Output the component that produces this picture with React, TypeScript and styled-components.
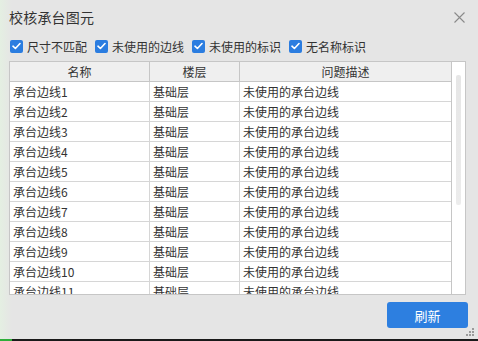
import React from "react";
import styled, { createGlobalStyle } from "styled-components";

const Global = createGlobalStyle`
  html, body { margin: 0; padding: 0; }
  body {
    background: #e5e5e5;
    font-family: "Noto Sans CJK SC", "Noto Sans", sans-serif;
    color: #333;
  }
  * { box-sizing: border-box; }
`;

const Window = styled.div`
  position: relative;
  width: 478px;
  height: 341px;
  overflow: hidden;
  background: linear-gradient(90deg, #e4efe2 0px, #e5e8e4 8px, #e5e5e5 12px, #e5e5e5 100%);
  display: flex;
  flex-direction: column;
  padding: 0 12px 0 9px;
`;

const TitleBar = styled.div`
  height: 34px;
  display: flex;
  align-items: center;
  justify-content: space-between;
`;

const Title = styled.div`
  font-size: 14px;
  color: #333;
  letter-spacing: 0.2px;
`;

const Close = styled.div`
  width: 12px;
  height: 12px;
  margin-right: 1px;
  display: flex;
  align-items: center;
  justify-content: center;
`;

const Filters = styled.div`
  height: 24px;
  margin-bottom: 3px;
  display: flex;
  align-items: center;
  gap: 8px;
  padding-left: 1px;
`;

const Check = styled.label`
  display: flex;
  align-items: center;
  gap: 4px;
  font-size: 12px;
  color: #333;
`;

const Box = styled.span`
  width: 13px;
  height: 13px;
  border-radius: 2px;
  background: #2b7de0;
  display: flex;
  align-items: center;
  justify-content: center;
`;

const Table = styled.div`
  height: 234px;
  border: 1px solid #c6c6c6;
  background: #fff;
  display: flex;
  overflow: hidden;
`;

const Grid = styled.div`
  flex: 1;
  display: grid;
  grid-template-columns: 140px 90px 1fr;
  grid-auto-rows: 20px;
  align-content: start;
`;

const Head = styled.div<{ $last?: boolean }>`
  background: #efefef;
  border-bottom: 1px solid #c6c6c6;
  border-right: ${(p) => (p.$last ? "none" : "1px solid #c6c6c6")};
  font-size: 12px;
  display: flex;
  align-items: center;
  justify-content: center;
  color: #333;
`;

const Cell = styled.div<{ $last?: boolean }>`
  border-bottom: 1px solid #d6d6d6;
  border-right: ${(p) => (p.$last ? "none" : "1px solid #d6d6d6")};
  font-size: 12px;
  display: flex;
  align-items: center;
  padding-left: 3px;
  color: #333;
  white-space: nowrap;
`;

const Scroll = styled.div`
  width: 14px;
  border-left: 1px solid #c6c6c6;
  background: #fff;
  display: flex;
  justify-content: center;
  padding-top: 13px;
`;

const Thumb = styled.div`
  width: 5px;
  height: 130px;
  border-radius: 2px;
  background: linear-gradient(180deg, #e6e6e6, #ececec);
`;

const Footer = styled.div`
  margin-top: 7px;
  display: flex;
  justify-content: flex-end;
`;

const Button = styled.button`
  width: 81px;
  height: 26px;
  border: none;
  border-radius: 3px;
  background: #2d7fe0;
  color: #fff;
  font-family: inherit;
  font-size: 13px;
  margin-right: -2px;
`;

const Grip = styled.svg`
  position: absolute;
  right: 4px;
  bottom: 5px;
`;

const Taskbar = styled.div`
  position: absolute;
  left: 0;
  right: 0;
  bottom: 0;
  height: 2px;
  background: linear-gradient(90deg, #2eae3a 0, #2eae3a 12px, #1a1a1a 12px);
`;

const Tick = () => (
  <svg width="9" height="8" viewBox="0 0 9 8">
    <path d="M1 4.2 L3.4 6.5 L8 1.5" stroke="#fff" strokeWidth="1.6" fill="none" strokeLinecap="round" strokeLinejoin="round" />
  </svg>
);

const filters = ["尺寸不匹配", "未使用的边线", "未使用的标识", "无名称标识"];

const rows = Array.from({ length: 11 }, (_, i) => ({
  name: `承台边线${i + 1}`,
  floor: "基础层",
  desc: "未使用的承台边线",
}));

export default function App() {
  return (
    <>
      <Global />
      <Window>
        <TitleBar>
          <Title>校核承台图元</Title>
          <Close>
            <svg width="11" height="11" viewBox="0 0 11 11">
              <path d="M0.5 0.5 L10.5 10.5 M10.5 0.5 L0.5 10.5" stroke="#8a8a8a" strokeWidth="1.1" />
            </svg>
          </Close>
        </TitleBar>
        <Filters>
          {filters.map((f) => (
            <Check key={f}>
              <Box>
                <Tick />
              </Box>
              {f}
            </Check>
          ))}
        </Filters>
        <Table>
          <Grid>
            <Head>名称</Head>
            <Head>楼层</Head>
            <Head $last>问题描述</Head>
            {rows.map((r) => (
              <React.Fragment key={r.name}>
                <Cell>{r.name}</Cell>
                <Cell>{r.floor}</Cell>
                <Cell $last>{r.desc}</Cell>
              </React.Fragment>
            ))}
          </Grid>
          <Scroll>
            <Thumb />
          </Scroll>
        </Table>
        <Footer>
          <Button>刷新</Button>
        </Footer>
        <Grip width="8" height="8" viewBox="0 0 8 8">
          <rect x="6" y="0" width="2" height="2" fill="#9a9a9a" />
          <rect x="3" y="3" width="2" height="2" fill="#9a9a9a" />
          <rect x="6" y="3" width="2" height="2" fill="#9a9a9a" />
          <rect x="0" y="6" width="2" height="2" fill="#9a9a9a" />
          <rect x="3" y="6" width="2" height="2" fill="#9a9a9a" />
          <rect x="6" y="6" width="2" height="2" fill="#9a9a9a" />
        </Grip>
        <Taskbar />
      </Window>
    </>
  );
}
